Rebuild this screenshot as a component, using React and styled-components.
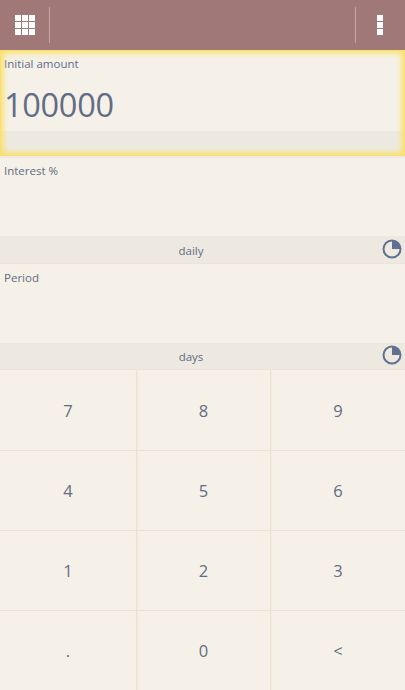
import React from 'react';
import styled, { createGlobalStyle } from 'styled-components';

const GlobalStyle = createGlobalStyle`
    html, body {
        margin: 0;
        padding: 0;
        background: #f5f1e9;
    }
    body {
        font-family: "Open Sans", "Noto Sans", sans-serif;
        color: #626c84;
    }
`;

const Page = styled.div`
    width: 405px;
    height: 690px;
    overflow: hidden;
    display: flex;
    flex-direction: column;
`;

const Toolbar = styled.div`
    height: 50px;
    flex: none;
    display: flex;
    align-items: center;
    background: #a07877;
`;

const ToolButton = styled.div`
    width: ${props => props.width}px;
    height: 36px;
    display: flex;
    align-items: center;
    justify-content: center;
    box-sizing: border-box;
    padding-right: ${props => props.side === 'left' ? 2 : 0}px;
    border-${props => props.side}: 1px solid #c9a5a5;
`;

const Spacer = styled.div`
    flex: 1;
`;

const Field = styled.div`
    position: relative;
    height: ${props => props.height}px;
    flex: none;
    display: flex;
    flex-direction: column;
    box-sizing: border-box;
    border-bottom: 1px solid #ece5d6;
`;

const Glow = styled.div`
    position: absolute;
    inset: 0;
    pointer-events: none;
    box-shadow: inset 0 0 6px 2px #fbdf5e;
    border: 1px solid #fbe16c;
`;

const Label = styled.div`
    height: 26px;
    flex: none;
    padding: 6px 4px 0;
    box-sizing: border-box;
    font-size: 11.5px;
    line-height: 16px;
`;

const Value = styled.div`
    flex: 1;
    padding-left: 4px;
    padding-top: 2px;
    font-size: 32.5px;
    line-height: 53px;
    letter-spacing: -0.3px;
`;

const Unit = styled.div`
    position: relative;
    height: ${props => props.height || 27}px;
    flex: none;
    display: flex;
    align-items: center;
    justify-content: center;
    box-sizing: border-box;
    padding: 1px 23px 0 0;
    background: #ede9e1;
    font-size: 11.5px;
`;

const UnitIcon = styled.svg`
    position: absolute;
    right: 3px;
    bottom: 4px;
`;

const Keypad = styled.div`
    flex: 1;
    display: grid;
    grid-template-columns: 137px 134px 134px;
    grid-template-rows: 81px 80px 80px 79px;
    background: #f5f1e8;
`;

const Key = styled.div`
    display: flex;
    align-items: center;
    justify-content: center;
    box-sizing: border-box;
    font-size: 16.5px;
    border-right: ${props => props.last ? 'none' : '1px solid #e9e3d2'};
    border-bottom: ${props => props.bottom ? 'none' : '1px solid #e9e3d2'};
    box-shadow: ${props => props.last ? 'none' : '1px 0 0 #f0ebdd'};
`;

const GridIcon = () => (
    <svg width="20" height="20" viewBox="0 0 20 20" fill="#fff">
        {[0, 7, 14].map(y => [0, 7, 14].map(x => (
            <rect key={`${x}-${y}`} x={x} y={y} width="6" height="6" />
        )))}
    </svg>
);

const MenuIcon = () => (
    <svg width="6" height="20" viewBox="0 0 6 20" fill="#fff">
        {[0, 7, 14].map(y => <rect key={y} x="0" y={y} width="6" height="6" />)}
    </svg>
);

const PieIcon = () => (
    <UnitIcon width="20" height="20" viewBox="0 0 20 20">
        <circle cx="10" cy="10" r="8.5" fill="none" stroke="#5f7090" strokeWidth="2" />
        <path d="M10 1.5 A8.5 8.5 0 0 1 18.5 10 L10 10 Z" fill="#5f7090" />
    </UnitIcon>
);

const keys = ['7', '8', '9', '4', '5', '6', '1', '2', '3', '.', '0', '<'];

function App() {
    return (
        <Page>
            <GlobalStyle />
            <Toolbar>
                <ToolButton width={50} side="right"><GridIcon /></ToolButton>
                <Spacer />
                <ToolButton width={50} side="left"><MenuIcon /></ToolButton>
            </Toolbar>
            <Field height={107}>
                <Label>Initial amount</Label>
                <Value>100000</Value>
                <Unit />
                <Glow />
            </Field>
            <Field height={107}>
                <Label>Interest %</Label>
                <Spacer />
                <Unit>daily<PieIcon /></Unit>
            </Field>
            <Field height={106}>
                <Label>Period</Label>
                <Spacer />
                <Unit height={26}>days<PieIcon /></Unit>
            </Field>
            <Keypad>
                {keys.map((k, i) => (
                    <Key key={k} last={i % 3 === 2} bottom={i > 8}>{k}</Key>
                ))}
            </Keypad>
        </Page>
    );
}

export default App;
